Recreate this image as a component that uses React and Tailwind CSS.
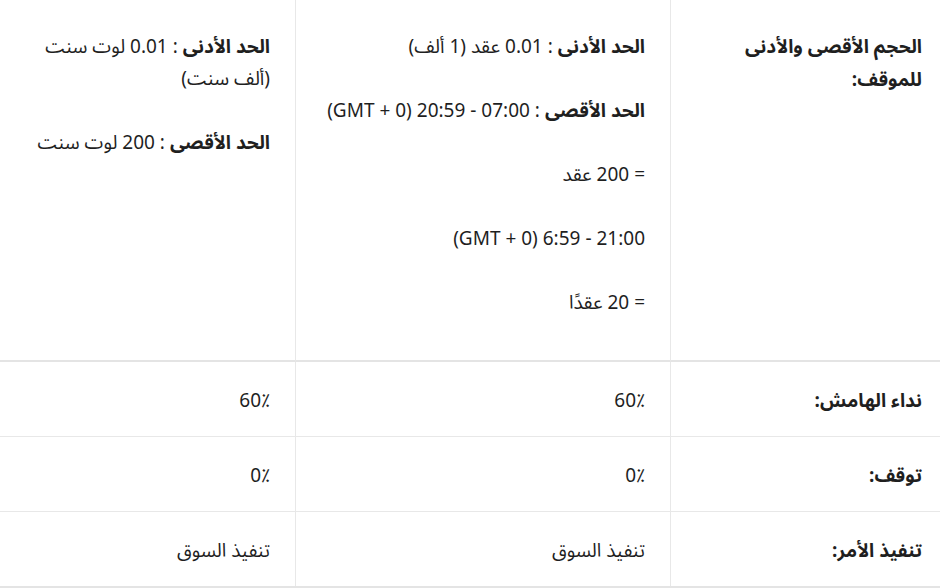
import React from "react";

function P({ children, last }) {
  return <p className={`leading-[32px] ${last ? "" : "mb-[32px]"}`}>{children}</p>;
}

export default function App() {
  return (
    <div dir="rtl" className="w-[940px] h-[588px] bg-white text-[#1f1f1f] text-[19px] font-['Noto_Sans_Arabic','Noto_Sans','DejaVu_Sans',sans-serif]">
      <div className="grid grid-cols-[270px_375px_295px] border-b-2 border-[#e4e4e4]">
        {/* Row 1 */}
        <div className="h-[362px] pt-[31px] pr-[18px] pl-[20px] border-l border-[#e8e8e8] border-b-2 border-b-[#e4e4e4]">
          <p className="leading-[33px] font-bold">الحجم الأقصى والأدنى للموقف:</p>
        </div>
        <div className="h-[362px] pt-[31px] pr-[25px] pl-[20px] border-l border-[#e8e8e8] border-b-2 border-b-[#e4e4e4]">
          <P><b>الحد الأدنى</b> : 0.01 عقد (1 ألف)</P>
          <P><b>الحد الأقصى</b> : <span dir="ltr">(GMT + 0) 20:59 - 07:00</span></P>
          <P>= 200 عقد</P>
          <P><span dir="ltr">(GMT + 0) 6:59 - 21:00</span></P>
          <P last>= 20 عقدًا</P>
        </div>
        <div className="h-[362px] pt-[31px] pr-[25px] pl-[20px] border-b-2 border-b-[#e4e4e4]">
          <P><b>الحد الأدنى</b> : 0.01 لوت سنت (ألف سنت)</P>
          <P last><b>الحد الأقصى</b> : 200 لوت سنت</P>
        </div>

        {/* Row 2 */}
        <div className="h-[75px] flex items-center pt-1 pr-[18px] border-l border-[#e8e8e8] border-b border-b-[#e8e8e8] font-bold">نداء الهامش:</div>
        <div className="h-[75px] flex items-center pt-1 pr-[25px] border-l border-[#e8e8e8] border-b border-b-[#e8e8e8]">60٪</div>
        <div className="h-[75px] flex items-center pt-1 pr-[25px] border-b border-b-[#e8e8e8]">60٪</div>

        {/* Row 3 */}
        <div className="h-[75px] flex items-center pt-1 pr-[18px] border-l border-[#e8e8e8] border-b border-b-[#e8e8e8] font-bold">توقف:</div>
        <div className="h-[75px] flex items-center pt-1 pr-[25px] border-l border-[#e8e8e8] border-b border-b-[#e8e8e8]">0٪</div>
        <div className="h-[75px] flex items-center pt-1 pr-[25px] border-b border-b-[#e8e8e8]">0٪</div>

        {/* Row 4 */}
        <div className="h-[74px] flex items-center pt-1 pr-[18px] border-l border-[#e8e8e8] font-bold">تنفيذ الأمر:</div>
        <div className="h-[74px] flex items-center pt-1 pr-[25px] border-l border-[#e8e8e8]">تنفيذ السوق</div>
        <div className="h-[74px] flex items-center pt-1 pr-[25px]">تنفيذ السوق</div>
      </div>
    </div>
  );
}
